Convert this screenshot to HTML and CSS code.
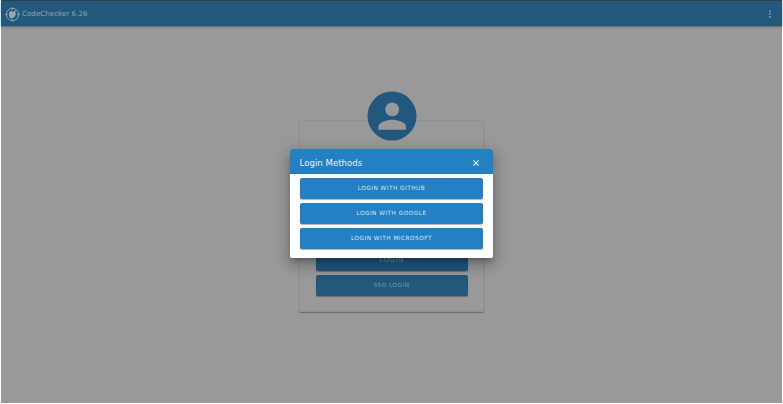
FILE: index.html
```
<!DOCTYPE html>
<html lang="en">
<head>
<meta charset="utf-8">
<title>CodeChecker</title>
<link rel="stylesheet" href="styles.css">
</head>
<body>
<div class="app">
  <header class="bar">
    <svg class="logo" viewBox="0 0 16 16" fill="none" stroke="#a3afb8">
      <circle cx="8" cy="8" r="6.5" stroke-width=".9"/>
      <path d="M8 .3v2.4M8 13.3v2.4M.3 8h2.4M13.3 8h2.4" stroke-width="1"/>
      <path d="M4.3 5.8l2.4-1.6 2.6.8 2.7-2.2-1.2 3.4.8 1.6-2 3.4-3.2 1-2-2.6z" fill="#a3afb8" stroke="none"/>
      <path d="M4.5 6.6l4 4M6.5 4.6l4 4" stroke="#53768e" stroke-width=".5"/>
    </svg>
    <span class="name">CodeChecker 6.26</span>
    <svg class="dots" viewBox="0 0 4 10" fill="#94a5b1"><circle cx="2" cy="1.8" r=".9"/><circle cx="2" cy="4.8" r=".9"/><circle cx="2" cy="7.8" r=".9"/></svg>
  </header>
  <main class="page">
    <section class="card">
      <svg class="avatar" viewBox="0 0 50 50"><circle cx="25" cy="25" r="24.5" fill="#22587e"/><circle cx="25.2" cy="18.4" r="6.9" fill="#999"/><path d="M11.5 38.7v-3.2c0-4.5 9-6.8 13.7-6.8s13.7 2.3 13.7 6.8v3.2z" fill="#999"/></svg>
      <div class="actions">
        <button class="btn dim large">LOGIN</button>
        <button class="btn dim">SSO LOGIN</button>
      </div>
    </section>
  </main>
</div>
<div class="dialog" role="dialog">
  <div class="title"><span>Login Methods</span>
    <svg class="close" viewBox="0 0 8 8" stroke="#e8f2f9" stroke-width="1.1"><path d="M1.4 1.4l5.2 5.2M6.6 1.4L1.4 6.6"/></svg>
  </div>
  <div class="methods">
    <button class="btn">LOGIN WITH GITHUB</button>
    <button class="btn">LOGIN WITH GOOGLE</button>
    <button class="btn">LOGIN WITH MICROSOFT</button>
  </div>
</div>
</body>
</html>
```
FILE: styles.css
```
* { box-sizing: border-box; }
body {
  margin: 0;
  width: 783px;
  height: 404px;
  overflow: hidden;
  background: #fff;
  font-family: "DejaVu Sans", sans-serif;
}
.app {
  height: 403px;
  margin: 0 1px;
  background: #999;
}
.bar {
  display: flex;
  align-items: center;
  height: 26px;
  padding: 1px 10px 0 4px;
  border-top: 1px solid #333f48;
  background: #22587e;
  box-shadow: 0 1px 2px rgba(0, 0, 0, .35);
}
.logo { width: 15px; height: 15px; }
.name {
  margin: -1px 0 0 2px;
  color: #94a5b1;
  font-size: 7.15px;
}
.dots { width: 4px; height: 10px; margin-left: auto; }
.page { display: flex; justify-content: center; padding-top: 94px; }
.card {
  display: flex;
  flex-direction: column;
  align-items: center;
  width: 185px;
  height: 192px;
  border: 1px solid #909090;
  border-radius: 2px;
  box-shadow: 0 1px 1px rgba(0, 0, 0, .3);
}
.avatar { width: 50px; height: 50px; margin-top: -30px; flex: none; }
.actions {
  display: flex;
  flex-direction: column;
  gap: 4px;
  width: 152px;
  margin-top: 108.5px;
}
.btn {
  display: flex;
  align-items: center;
  justify-content: center;
  width: 100%;
  height: 21px;
  padding: 0 0 1px;
  border: 0;
  border-radius: 2px;
  background: #2280c3;
  box-shadow: 0 1px 1px rgba(0, 0, 0, .3);
  color: #d8e9f5;
  font: 5.75px "DejaVu Sans", sans-serif;
  letter-spacing: .5px;
}
.dim { background: #22587e; color: #7b98ab; }
.large { font-size: 7px; }
.dialog {
  position: absolute;
  left: 289.6px;
  top: 149px;
  width: 203px;
  height: 109px;
  border-radius: 2px;
  overflow: hidden;
  background: #fff;
  box-shadow: 0 4px 5px -2px rgba(0, 0, 0, .25), 0 8px 13px 1px rgba(0, 0, 0, .16), 0 3px 16px 3px rgba(0, 0, 0, .12);
}
.title {
  display: flex;
  align-items: center;
  justify-content: space-between;
  height: 25px;
  padding: 2px 13px 0 10px;
  background: #2280c3;
  color: #e8f2f9;
  font-size: 8.6px;
}
.close { width: 8px; height: 8px; }
.methods {
  display: flex;
  flex-direction: column;
  gap: 4.2px;
  padding: 4px 9.2px 0 10px;
}
```
